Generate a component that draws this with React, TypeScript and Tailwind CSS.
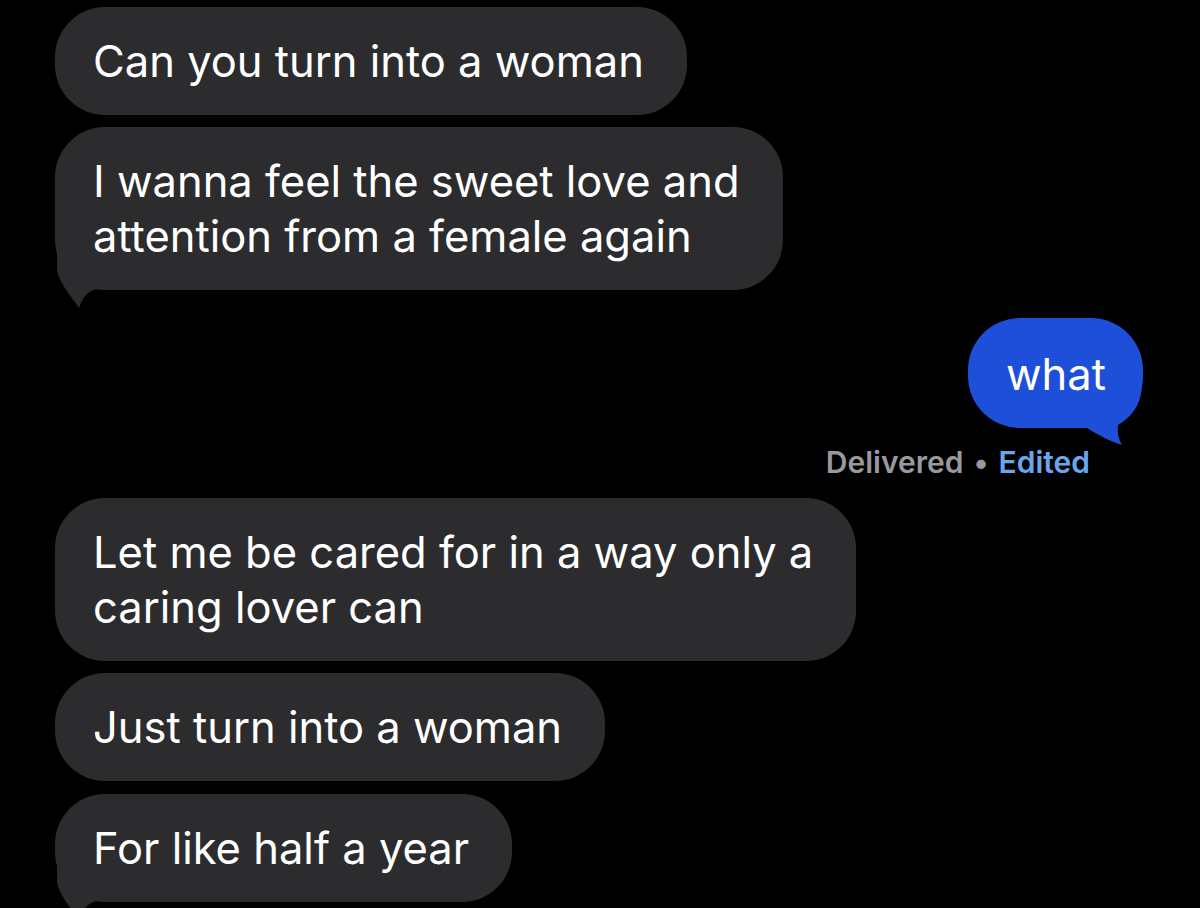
import React from "react";

const font = { fontFamily: "Inter, 'Noto Sans', sans-serif" };

// tail hangs off the bottom-left corner; origin of the path = bubble's bottom-left
function LeftTail() {
  return (
    <svg className="absolute left-[-5px] bottom-[-20px]" width="65" height="70" viewBox="-5 -50 65 70">
      <path
        d="M2 -45 L2 -20 C4 -8 14 4 24 18 C27 10 30 2 42 -1 L20 -25 Z"
        fill="#2c2c2e"
      />
    </svg>
  );
}

// same idea, bottom-right corner
function RightTail() {
  return (
    <svg className="absolute right-[-5px] bottom-[-20px]" width="65" height="70" viewBox="-60 -50 65 70">
      <path
        d="M-1 -45 C-1 -30 -6 -14 -25 -3 C-26 5 -24 12 -21 17 C-30 14 -44 8 -56 0 L-25 -25 Z"
        fill="#1e4fd9"
      />
    </svg>
  );
}

function Bubble({ lines, tail }: { lines: string[]; tail?: boolean }) {
  return (
    <div className="relative w-fit rounded-[50px] bg-[#2c2c2e] pl-[38px] pr-[43px] pt-[27px] pb-[26px] text-[43.5px] leading-[55px] text-white whitespace-nowrap">
      {lines.map((l, i) => (
        <div key={i}>{l}</div>
      ))}
      {tail && <LeftTail />}
    </div>
  );
}

export default function App() {
  return (
    <div className="h-[908px] w-[1200px] overflow-hidden bg-black" style={font}>
      <div className="flex flex-col pl-[55px] pr-[57px] pt-[7px]">
        <Bubble lines={["Can you turn into a woman"]} />
        <div className="mt-[12px]">
          <Bubble lines={["I wanna feel the sweet love and", "attention from a female again"]} tail />
        </div>

        <div className="mt-[28px] flex justify-end">
          <div className="relative w-fit rounded-[52px] bg-[#1e4fd9] pl-[38px] pr-[37px] pt-[27px] pb-[25px] text-[43.5px] leading-[58px] text-white">
            what
            <RightTail />
          </div>
        </div>
        <div className="mt-[17px] flex justify-end pr-[53px] text-[30px] leading-[34px] font-semibold">
          <span className="text-[#98989e]">Delivered</span>
          <span className="mx-[10px] text-[#98989e]">•</span>
          <span className="text-[#6aa6ee]">Edited</span>
        </div>

        <div className="mt-[19px]">
          <Bubble lines={["Let me be cared for in a way only a", "caring lover can"]} />
        </div>
        <div className="mt-[12px]">
          <Bubble lines={["Just turn into a woman"]} />
        </div>
        <div className="mt-[13px]">
          <Bubble lines={["For like half a year"]} tail />
        </div>
      </div>
    </div>
  );
}
